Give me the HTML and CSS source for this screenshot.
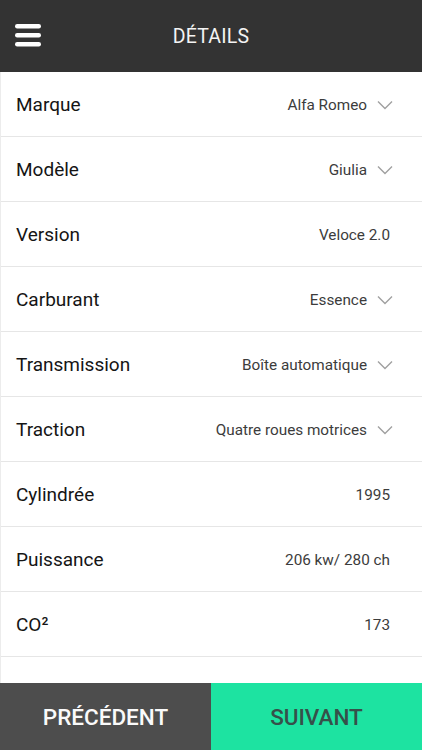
FILE: index.html
```html
<!DOCTYPE html>
<html lang="fr">
<head>
    <meta charset="UTF-8">
    <meta name="viewport" content="width=device-width, initial-scale=1.0">
    <title>Détails</title>
    <link rel="stylesheet" href="styles.css">
</head>
<body>
    <div class="page">
        <header class="topbar">
            <button class="menu-btn" aria-label="Menu">
                <svg width="26" height="24" viewBox="0 0 26 24">
                    <rect x="0" y="0" width="26" height="4.4" rx="2.2" fill="#fff"/>
                    <rect x="0" y="9" width="26" height="4.4" rx="2.2" fill="#fff"/>
                    <rect x="0" y="18" width="26" height="4.4" rx="2.2" fill="#fff"/>
                </svg>
            </button>
            <h1>DÉTAILS</h1>
        </header>

        <ul class="details">
            <li class="row">
                <span class="label">Marque</span>
                <span class="value">Alfa Romeo</span>
                <svg class="chevron" width="16" height="10" viewBox="0 0 16 10"><path d="M1 1.5 L8 8.5 L15 1.5" fill="none" stroke="#a0a0a0" stroke-width="1.4"/></svg>
            </li>
            <li class="row">
                <span class="label">Modèle</span>
                <span class="value">Giulia</span>
                <svg class="chevron" width="16" height="10" viewBox="0 0 16 10"><path d="M1 1.5 L8 8.5 L15 1.5" fill="none" stroke="#a0a0a0" stroke-width="1.4"/></svg>
            </li>
            <li class="row">
                <span class="label">Version</span>
                <span class="value plain">Veloce 2.0</span>
            </li>
            <li class="row">
                <span class="label">Carburant</span>
                <span class="value">Essence</span>
                <svg class="chevron" width="16" height="10" viewBox="0 0 16 10"><path d="M1 1.5 L8 8.5 L15 1.5" fill="none" stroke="#a0a0a0" stroke-width="1.4"/></svg>
            </li>
            <li class="row">
                <span class="label">Transmission</span>
                <span class="value">Boîte automatique</span>
                <svg class="chevron" width="16" height="10" viewBox="0 0 16 10"><path d="M1 1.5 L8 8.5 L15 1.5" fill="none" stroke="#a0a0a0" stroke-width="1.4"/></svg>
            </li>
            <li class="row">
                <span class="label">Traction</span>
                <span class="value">Quatre roues motrices</span>
                <svg class="chevron" width="16" height="10" viewBox="0 0 16 10"><path d="M1 1.5 L8 8.5 L15 1.5" fill="none" stroke="#a0a0a0" stroke-width="1.4"/></svg>
            </li>
            <li class="row">
                <span class="label">Cylindrée</span>
                <span class="value plain">1995</span>
            </li>
            <li class="row">
                <span class="label">Puissance</span>
                <span class="value plain">206 kw/ 280 ch</span>
            </li>
            <li class="row">
                <span class="label">CO²</span>
                <span class="value plain">173</span>
            </li>
        </ul>

        <footer class="actions">
            <button class="btn btn-prev">PRÉCÉDENT</button>
            <button class="btn btn-next">SUIVANT</button>
        </footer>
    </div>
</body>
</html>
```

FILE: styles.css
```css
body {
    margin: 0;
    padding: 0;
    font-family: Roboto, "Liberation Sans", Arial, sans-serif;
    background-color: #fff;
}

.page {
    display: flex;
    flex-direction: column;
    height: 750px;
    overflow: hidden;
}

.topbar {
    position: relative;
    display: flex;
    align-items: center;
    justify-content: center;
    height: 72px;
    flex-shrink: 0;
    background-color: #333333;
}

.menu-btn {
    position: absolute;
    left: 15px;
    top: 24px;
    padding: 0;
    border: none;
    background: none;
    line-height: 0;
}

.topbar h1 {
    margin: 0;
    font-size: 19.5px;
    font-weight: 400;
    color: #f4f4f4;
    letter-spacing: 0.2px;
}

.details {
    flex: 1;
    margin: 0;
    padding: 0;
    list-style: none;
    border-left: 1px solid #ececec;
}

.row {
    display: flex;
    align-items: center;
    box-sizing: border-box;
    height: 65px;
    padding: 1px 29px 0 15px;
    border-bottom: 1px solid #e6e6e6;
}

.label {
    flex: 1;
    font-size: 19px;
    color: #151515;
}

.value {
    font-size: 15.3px;
    color: #3c3c3c;
}

.value.plain {
    margin-right: 3px;
}

.chevron {
    margin-left: 10px;
    margin-top: 1px;
}

.actions {
    display: flex;
    height: 67px;
    flex-shrink: 0;
}

.btn {
    flex: 1;
    border: none;
    padding: 0;
    font-family: Roboto, "Liberation Sans", Arial, sans-serif;
    font-size: 22.5px;
    font-weight: 500;
}

.btn-prev {
    background-color: #4d4d4d;
    color: #fafafa;
}

.btn-next {
    background-color: #1de3a1;
    color: #36504a;
}
```
